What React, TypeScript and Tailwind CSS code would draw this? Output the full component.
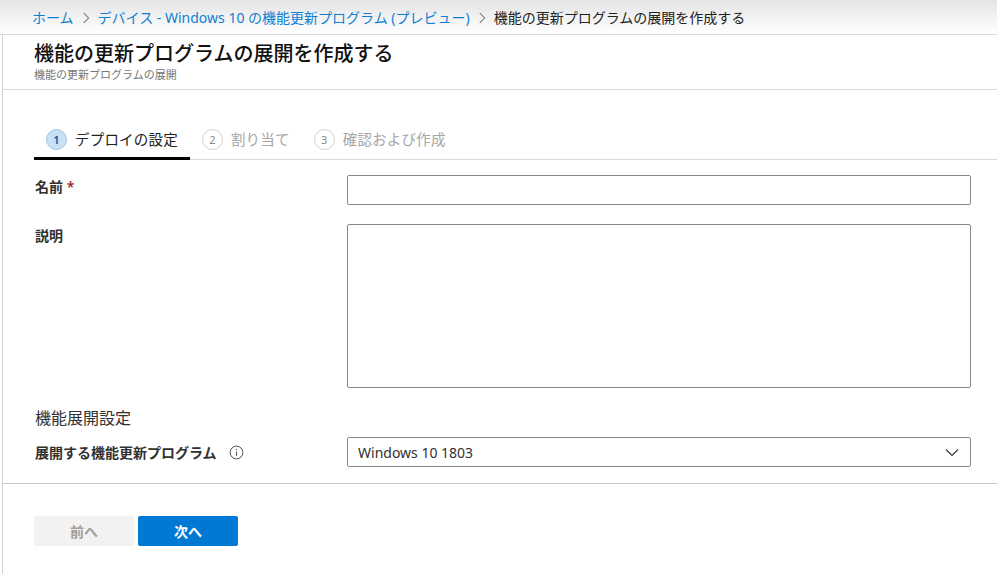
import React from 'react';

const font = { fontFamily: '"Noto Sans", "Noto Sans CJK JP", sans-serif' };

const Chevron = ({ className = '' }: { className?: string }) => (
  <svg viewBox="0 0 16 16" className={className} fill="none" stroke="currentColor" strokeWidth="1.2">
    <path d="M5.5 2.5 11 8l-5.5 5.5" />
  </svg>
);

const Step = ({ n, label, active }: { n: number; label: string; active?: boolean }) => (
  <div className={`flex items-center h-full px-[12px] ${active ? 'border-b-[3px] border-black' : 'border-b-[3px] border-transparent'}`}>
    <span
      className={`flex items-center justify-center w-[21px] h-[21px] rounded-full text-[11px] leading-none ${
        active ? 'bg-[#c7e0f4] border border-[#9ac6ea] text-[#005a9e] font-semibold' : 'border border-[#d0d0d0] text-[#8a8a8a]'
      }`}
    >
      {n}
    </span>
    <span className={`ml-[8px] text-[14.5px] tracking-[0.2px] ${active ? 'text-[#222]' : 'text-[#a6a6a6]'}`}>{label}</span>
  </div>
);

export default function App() {
  return (
    <div className="w-[997px] h-[574px] bg-white overflow-hidden" style={font}>
      <div className="h-[35px] bg-gradient-to-b from-[#e4e4e4] to-white border-b border-[#dadada] flex items-center pl-[32px] text-[14px] pt-[1px]">
        <span className="text-[#0f7fd3]">ホーム</span>
        <Chevron className="w-[14px] h-[14px] mx-[5px] text-[#777]" />
        <span className="text-[#0f7fd3]">デバイス - Windows 10 の機能更新プログラム (プレビュー)</span>
        <Chevron className="w-[14px] h-[14px] mx-[5px] text-[#777]" />
        <span className="text-[#222]">機能の更新プログラムの展開を作成する</span>
      </div>
      <div className="ml-[2px] border-l border-[#d4d4d4] h-[539px]">
        <div className="h-[55px] border-b border-[#d9d9d9] pl-[31px] pt-[5px]">
          <div className="text-[20px] leading-[28px] text-[#111] font-medium">機能の更新プログラムの展開を作成する</div>
          <div className="text-[11px] leading-[14px] text-[#777]">機能の更新プログラムの展開</div>
        </div>
        <div className="pt-[32px] pl-[31px]">
          <div className="flex h-[38px] border-b border-[#d9d9d9]">
            <div className="flex h-[38px] -mb-[1px]">
              <Step n={1} label="デプロイの設定" active />
              <Step n={2} label="割り当て" />
              <Step n={3} label="確認および作成" />
            </div>
          </div>
        </div>
        <div className="pl-[32px] pr-[26px] pt-[15px] text-[14px] text-[#323130]">
          <div className="flex items-start">
            <div className="w-[312px] pt-[2px] font-semibold leading-[20px]">
              名前 <span className="text-[#a4262c]">*</span>
            </div>
            <div className="flex-1 h-[30px] border border-[#8a8886] rounded-[2px]" />
          </div>
          <div className="flex items-start mt-[19px]">
            <div className="w-[312px] pt-[2px] font-semibold leading-[20px]">説明</div>
            <div className="flex-1 h-[164px] border border-[#8a8886] rounded-[2px]" />
          </div>
          <div className="mt-[18px] text-[16px] leading-[24px]">機能展開設定</div>
          <div className="flex items-center mt-[7px]">
            <div className="w-[312px] flex items-center font-semibold">
              展開する機能更新プログラム
              <svg viewBox="0 0 16 16" className="w-[15px] h-[15px] ml-[12px] text-[#444]" fill="none" stroke="currentColor" strokeWidth="1">
                <circle cx="8" cy="8" r="6.8" />
                <path d="M8 7v4.5" />
                <circle cx="8" cy="4.9" r="0.6" fill="currentColor" stroke="none" />
              </svg>
            </div>
            <div className="flex-1 h-[30px] border border-[#8a8886] rounded-[2px] flex items-center pl-[10px] pr-[10px]">
              <span className="flex-1 text-[#323130]">Windows 10 1803</span>
              <svg viewBox="0 0 16 16" className="w-[16px] h-[16px] text-[#333]" fill="none" stroke="currentColor" strokeWidth="1.1">
                <path d="M2 5.5l6 6 6-6" />
              </svg>
            </div>
          </div>
        </div>
        <div className="border-b border-[#c8c8c8] mt-[16px]" />
        <div className="flex gap-[4px] pl-[31px] pt-[32px]">
          <button className="w-[100px] h-[30px] bg-[#f3f2f1] text-[#a19f9d] text-[14px] font-bold rounded-[2px]">前へ</button>
          <button className="w-[100px] h-[30px] bg-[#0078d4] text-white text-[14px] font-bold rounded-[2px]">次へ</button>
        </div>
      </div>
    </div>
  );
}
